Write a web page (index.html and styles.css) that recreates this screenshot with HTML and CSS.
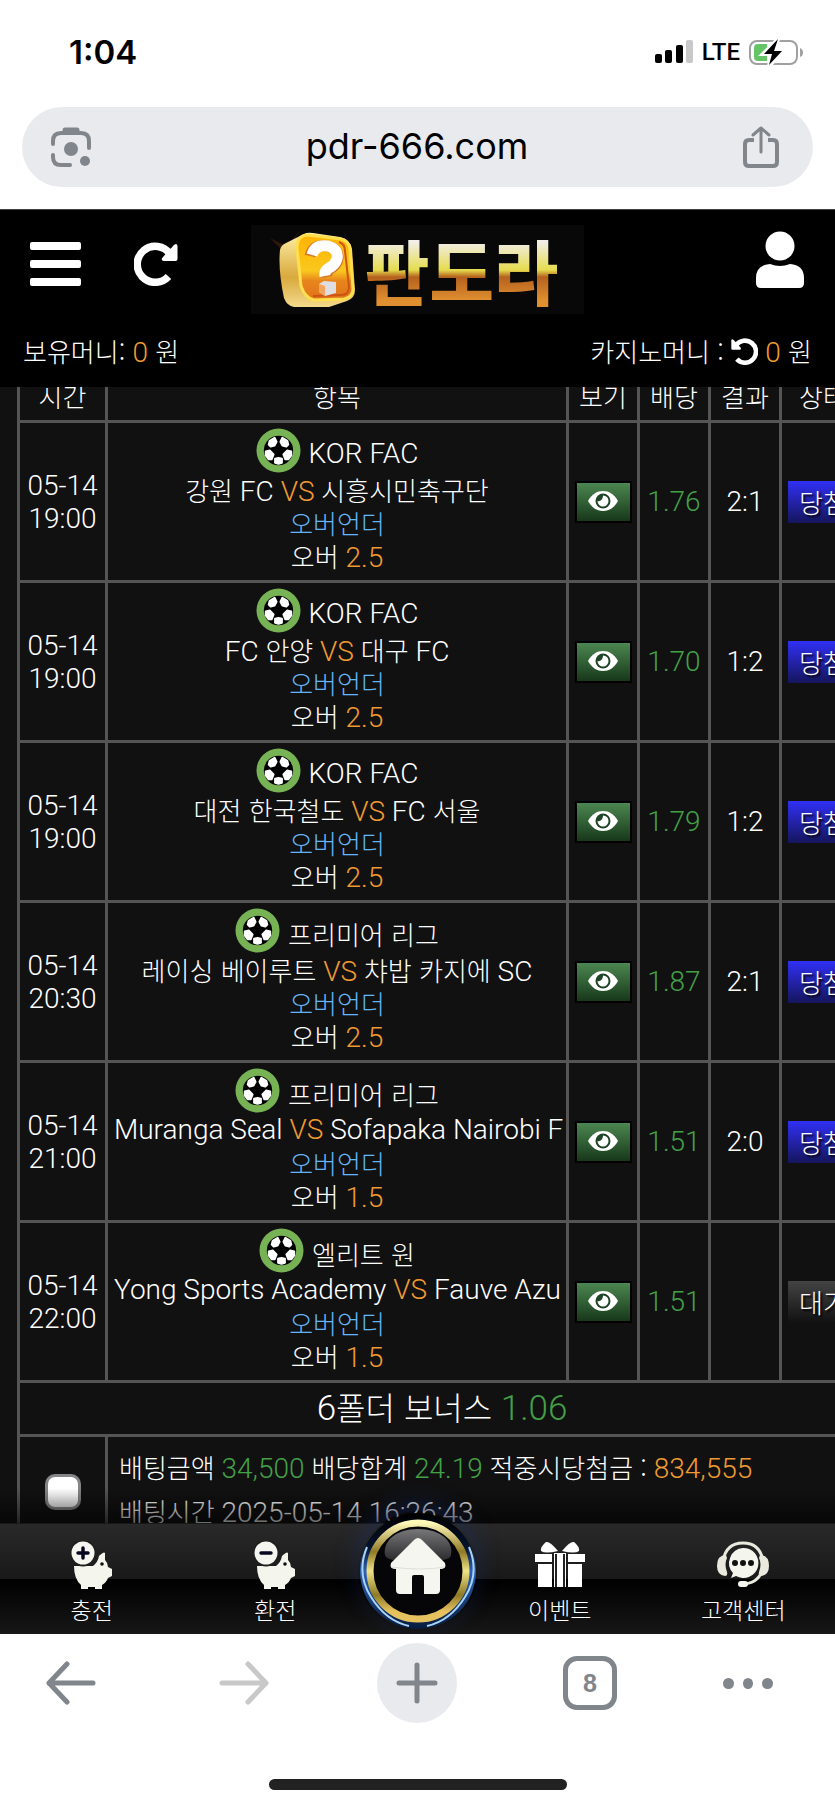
FILE: index.html
```html
<!DOCTYPE html>
<html lang="ko">
<head>
<meta charset="UTF-8">
<meta name="viewport" content="width=device-width, initial-scale=1.0">
<link rel="stylesheet" href="styles.css">
<title>판도라</title>
</head>
<body>
  <svg class="sprite" aria-hidden="true">
    <symbol id="ball" viewBox="0 0 46 46">
      <circle cx="23" cy="23" r="22.5" fill="#77b255"/>
      <circle cx="23" cy="23" r="15" fill="#000"/>
      <g fill="#fff" stroke="#fff" stroke-width="2" stroke-linejoin="round">
        <path d="M14 13l5-3 2 4-2 4-4 1-2-2z"/>
        <path d="M32 13l-5-3-2 4 2 4 4 1 2-2z"/>
        <path d="M10 24l4-1 4 4-2 5-3 0-3-4z"/>
        <path d="M36 24l-4-1-4 4 2 5 3 0 3-4z"/>
        <path d="M19.500 31.500l3.500-1 3.500 1v4l-3.500 1-3.500-1z"/>
      </g>
    </symbol>
    <symbol id="eye" viewBox="0 0 32 22">
      <path d="M1 11C5 4 10 1 16 1s11 3 15 10c-4 7-9 10-15 10S5 18 1 11z" fill="#fff"/>
      <circle cx="16" cy="11" r="7.500" fill="#1f4526"/>
      <path d="M16 5.500a5.500 5.500 0 1 1-5.500 5.500c2.500 1 5.500-1.500 5.500-5.500z" fill="#fff"/>
    </symbol>
    <symbol id="rotate" viewBox="0 0 44 44">
      <path d="M34.500 34.500A18 18 0 1 1 36 12" fill="none" stroke="#fff" stroke-width="7.500"/>
      <path d="M43.500 4v13a2 2 0 0 1-2 2H30q-4-.5-1-4L40 3q3-2.500 3.500 1z" fill="#fff"/>
    </symbol>
    <symbol id="pig" viewBox="0 0 42 48">
      <path d="M3 25h19q5-4 6-10 5-5 6-3v7q3 3 3 7l4 2v7l-4 2q-2 5-6 7v4h-7v-2h-7v2h-7v-4Q3 38 3 25z" fill="#f4f5ec"/>
      <circle cx="31" cy="23" r="1.800" fill="#111"/>
      <circle cx="12" cy="12" r="13.500" fill="#1f1f1f"/>
      <circle cx="12" cy="12" r="11.500" fill="#f6f6f0"/>
      <path d="M7 12h10" stroke="#070720" stroke-width="3.500" stroke-linecap="round"/>
    </symbol>
  </svg>

  <div class="status">
    <span class="clock">1:04</span>
    <div class="signal">
      <svg width="40" height="26" viewBox="0 0 40 26">
        <rect x="1" y="15" width="7" height="9" rx="2"/>
        <rect x="11" y="11" width="7" height="13" rx="2"/>
        <rect x="22" y="6" width="7" height="18" rx="2"/>
        <rect x="32" y="1" width="7" height="23" rx="2" fill="#c8c8c8"/>
      </svg>
      <span class="net">LTE</span>
      <svg width="56" height="28" viewBox="0 0 56 28">
        <rect x="2" y="3" width="47" height="23" rx="7" fill="none" stroke="#a0a0a0" stroke-width="2"/>
        <path d="M10 6h9v17h-9q-4 0-4-4v-9q0-4 4-4z" fill="#65c466"/>
        <path d="M52 10q3 1 3 4.500T52 19z" fill="#a0a0a0"/>
        <path d="M30 1L15 16h9l-3 12 15-15h-9z" stroke="#fff" stroke-width="4"/>
        <path d="M30 1L16 16h8l-3 11 13-14h-8z"/>
      </svg>
    </div>
  </div>

  <div class="urlbar">
    <button type="button" class="plain" aria-label="Lens">
      <svg width="42" height="42" viewBox="0 0 42 42" fill="none" stroke="#80868b" stroke-width="4" stroke-linecap="round">
        <path d="M3 18v-3q0-8 8-8h20q8 0 8 8v7M3 29v2q0 8 8 8h9"/>
        <path d="M13 6l3-4h10l3 4z" fill="#80868b" stroke="none"/>
        <path d="M15 4h12" stroke-width="5"/>
        <circle cx="21" cy="23" r="7" fill="#80868b" stroke="none"/>
        <circle cx="35" cy="35" r="5" fill="#80868b" stroke="none"/>
      </svg>
    </button>
    <span class="url">pdr-666.com</span>
    <button type="button" class="plain" aria-label="공유">
      <svg width="38" height="42" viewBox="0 0 38 42" fill="none" stroke="#80868b" stroke-width="4" stroke-linecap="round" stroke-linejoin="round">
        <path d="M12 14H7q-4 0-4 4v18q0 4 4 4h24q4 0 4-4V18q0-4-4-4h-5" stroke-linecap="butt"/>
        <path d="M19 26V2M11 9l8-7 8 7" stroke-width="3"/>
      </svg>
    </button>
  </div>

  <main class="site">
    <header class="top">
      <div class="top-bar">
        <div class="top-left">
          <button type="button" class="plain menu" aria-label="메뉴"><i></i><i></i><i></i></button>
          <button type="button" class="plain" aria-label="새로고침"><svg width="44" height="44"><use href="#rotate"/></svg></button>
        </div>
        <a href="#" class="logo">
          <svg width="92" height="84" viewBox="0 0 92 84">
            <defs>
              <linearGradient id="side" x1="0" y1="0" x2="0" y2="1">
                <stop offset="0" stop-color="#fff0a8"/><stop offset=".6" stop-color="#d9a93c"/><stop offset="1" stop-color="#f3d98c"/>
              </linearGradient>
              <linearGradient id="face" x1="0" y1="0" x2="0" y2="1">
                <stop offset="0" stop-color="#ffb300"/><stop offset=".55" stop-color="#f9c81e"/><stop offset=".7" stop-color="#e8861c"/><stop offset="1" stop-color="#e0701a"/>
              </linearGradient>
            </defs>
            <path d="M3 10l16 8L34 2 22 19l-8 26-1-25z" fill="#7a3510" opacity=".35"/>
            <path d="M13 22Q14 17 19 15L37 6q3-2 9-1l27 4q10 2 12 12l3 41q0 8-8 11l-18 6H27q-7-1-10-9Q11 42 13 22z" fill="url(#side)"/>
            <path d="M40 7l34 4q8 2 9 10l3 40q0 8-9 10l-30 1Q38 70 34 58L30 20Q30 8 40 7z" fill="url(#face)" stroke="#ffdf4d" stroke-width="3"/>
            <path d="M72 14q6 2 6 9l4 36q0 8-8 8l-28 1" fill="none" stroke="#cd5312" stroke-width="2"/>
            <path d="M43 28q3-12 17-10 12 2 11 13-1 6-8 10-4 3-3 8" fill="none" stroke="#d8742b" stroke-width="11"/>
            <path d="M45 27q3-11 16-9 11 3 9 13-2 6-8 9-5 3-4 8" fill="none" stroke="#fff" stroke-width="11"/>
            <path d="M52 56l5-3 12 1v11l-11 3-6-4z" fill="#dddde2"/>
            <path d="M52 56l6 2v10l-6-4z" fill="#f2a45d"/>
          </svg>
          <span class="logo-text">판도라</span>
        </a>
        <button type="button" class="plain user" aria-label="내 정보">
          <svg width="50" height="58" viewBox="0 0 50 58" fill="#fff">
            <circle cx="25" cy="15" r="14.500"/>
            <path d="M15 33q10 4 20 0 14 1 14 14v5q0 5-5 5H6q-5 0-5-5v-5q0-13 14-14z"/>
          </svg>
        </button>
      </div>
      <div class="money">
        <span>보유머니: <b class="num orange">0</b> 원</span>
        <span>카지노머니 : <button type="button" class="plain recall" aria-label="회수"><svg width="27" height="27"><use href="#rotate"/></svg></button> <b class="num orange">0</b> 원</span>
      </div>
    </header>

    <div class="bets">
      <table>
        <colgroup>
          <col class="c-time"><col><col class="c-odd"><col class="c-odd"><col class="c-odd"><col class="c-state">
        </colgroup>
        <thead>
          <tr><th>시간</th><th>항목</th><th>보기</th><th>배당</th><th>결과</th><th>상태</th></tr>
        </thead>
        <tbody>
          <tr>
            <td class="num">05-14<br>19:00</td>
            <td><div class="match">
              <div class="league"><svg width="45" height="45"><use href="#ball"/></svg><span class="num">KOR FAC</span></div>
              <div>강원<span class="num"> FC <b class="orange">VS</b> </span>시흥시민축구단</div>
              <div class="blue">오버언더</div>
              <div>오버<span class="num orange"> 2.5</span></div>
            </div></td>
            <td><button type="button" class="view" aria-label="보기"><svg width="32" height="22"><use href="#eye"/></svg></button></td>
            <td class="num green">1.76</td>
            <td class="num">2:1</td>
            <td><button type="button" class="state win">당첨</button></td>
          </tr>
          <tr>
            <td class="num">05-14<br>19:00</td>
            <td><div class="match">
              <div class="league"><svg width="45" height="45"><use href="#ball"/></svg><span class="num">KOR FAC</span></div>
              <div><span class="num">FC </span>안양<span class="num orange"> VS </span>대구<span class="num"> FC</span></div>
              <div class="blue">오버언더</div>
              <div>오버<span class="num orange"> 2.5</span></div>
            </div></td>
            <td><button type="button" class="view" aria-label="보기"><svg width="32" height="22"><use href="#eye"/></svg></button></td>
            <td class="num green">1.70</td>
            <td class="num">1:2</td>
            <td><button type="button" class="state win">당첨</button></td>
          </tr>
          <tr>
            <td class="num">05-14<br>19:00</td>
            <td><div class="match">
              <div class="league"><svg width="45" height="45"><use href="#ball"/></svg><span class="num">KOR FAC</span></div>
              <div>대전 한국철도<span class="num"> <b class="orange">VS</b> FC </span>서울</div>
              <div class="blue">오버언더</div>
              <div>오버<span class="num orange"> 2.5</span></div>
            </div></td>
            <td><button type="button" class="view" aria-label="보기"><svg width="32" height="22"><use href="#eye"/></svg></button></td>
            <td class="num green">1.79</td>
            <td class="num">1:2</td>
            <td><button type="button" class="state win">당첨</button></td>
          </tr>
          <tr>
            <td class="num">05-14<br>20:30</td>
            <td><div class="match">
              <div class="league"><svg width="45" height="45"><use href="#ball"/></svg><span>프리미어 리그</span></div>
              <div>레이싱 베이루트<span class="num orange"> VS </span>챠밥 카지에<span class="num"> SC</span></div>
              <div class="blue">오버언더</div>
              <div>오버<span class="num orange"> 2.5</span></div>
            </div></td>
            <td><button type="button" class="view" aria-label="보기"><svg width="32" height="22"><use href="#eye"/></svg></button></td>
            <td class="num green">1.87</td>
            <td class="num">2:1</td>
            <td><button type="button" class="state win">당첨</button></td>
          </tr>
          <tr>
            <td class="num">05-14<br>21:00</td>
            <td><div class="match">
              <div class="league"><svg width="45" height="45"><use href="#ball"/></svg><span>프리미어 리그</span></div>
              <div class="num">Muranga Seal <b class="orange">VS</b> Sofapaka Nairobi F</div>
              <div class="blue">오버언더</div>
              <div>오버<span class="num orange"> 1.5</span></div>
            </div></td>
            <td><button type="button" class="view" aria-label="보기"><svg width="32" height="22"><use href="#eye"/></svg></button></td>
            <td class="num green">1.51</td>
            <td class="num">2:0</td>
            <td><button type="button" class="state win">당첨</button></td>
          </tr>
          <tr>
            <td class="num">05-14<br>22:00</td>
            <td><div class="match">
              <div class="league"><svg width="45" height="45"><use href="#ball"/></svg><span>엘리트 원</span></div>
              <div class="num">Yong Sports Academy <b class="orange">VS</b> Fauve Azu</div>
              <div class="blue">오버언더</div>
              <div>오버<span class="num orange"> 1.5</span></div>
            </div></td>
            <td><button type="button" class="view" aria-label="보기"><svg width="32" height="22"><use href="#eye"/></svg></button></td>
            <td class="num green">1.51</td>
            <td></td>
            <td><button type="button" class="state">대기</button></td>
          </tr>
          <tr class="bonus">
            <td colspan="6"><span class="num">6</span>폴더 보너스<span class="num green"> 1.06</span></td>
          </tr>
          <tr class="total">
            <td><input type="checkbox" aria-label="선택"></td>
            <td colspan="5" class="sum">
              <div>배팅금액<span class="num green"> 34,500 </span>배당합계<span class="num green"> 24.19 </span>적중시당첨금 :<span class="num orange"> 834,555</span></div>
              <div>배팅시간<span class="num"> 2025-05-14 16:26:43</span></div>
            </td>
          </tr>
        </tbody>
      </table>
    </div>

    <nav class="dock">
      <a href="#">
        <svg width="42" height="48" viewBox="0 0 42 48"><use href="#pig"/><path d="M12 7v10" stroke="#070720" stroke-width="3.500" stroke-linecap="round"/></svg>
        충전
      </a>
      <a href="#">
        <svg width="42" height="48" viewBox="0 0 42 48"><use href="#pig"/></svg>
        환전
      </a>
      <a href="#" class="home" aria-label="홈">
        <svg width="120" height="120" viewBox="0 0 120 120">
          <defs>
            <linearGradient id="gold" x1="0" y1="0" x2="0" y2="1">
              <stop offset="0" stop-color="#fff8b8"/><stop offset=".3" stop-color="#8f7a25"/><stop offset=".5" stop-color="#efe287"/><stop offset=".75" stop-color="#8f7a25"/><stop offset=".92" stop-color="#e6c25f"/>
            </linearGradient>
            <linearGradient id="navy" x1="0" y1="0" x2="0" y2="1">
              <stop offset="0" stop-color="#000"/><stop offset=".3" stop-color="#04142e"/><stop offset=".5" stop-color="#2b62b8"/><stop offset="1" stop-color="#071a3c"/>
            </linearGradient>
            <linearGradient id="gloss" x1="0" y1="0" x2="0" y2="1">
              <stop offset="0" stop-color="#77777a"/><stop offset="1" stop-color="#2a2a2d"/>
            </linearGradient>
          </defs>
          <circle cx="60" cy="60" r="58" fill="url(#navy)"/>
          <path d="M9 36Q-2 62 13 86t38 29M111 36q11 26-4 50t-38 29" fill="none" stroke="#a8d4f5" stroke-width="2"/>
          <circle cx="60" cy="60" r="48" fill="#060608" stroke="url(#gold)" stroke-width="7"/>
          <path d="M60 18c22 0 36 12 33 26-1 5-8 6-33 6s-31-1-33-6c-2-14 11-26 33-26z" fill="url(#gloss)"/>
          <path d="M60 27q2 0 4 2l23 23q2 6-5 6v21q0 4-4 4H66V66q0-2-2-2h-8q-2 0-2 2v17H42q-4 0-4-4V58q-7 0-5-6l23-23q2-2 4-2z" fill="#f6f6f0"/>
          <path d="M33 56q30 4 54 0" fill="none" stroke="#dddfd8" stroke-width="1"/>
        </svg>
      </a>
      <a href="#">
        <svg width="54" height="48" viewBox="0 0 54 48" fill="#fff">
          <path d="M25 10Q12 13 8 10q-1-4 5-9 4-1 12 9zM29 10q13 3 17 0 1-4-5-9-4-1-12 9z"/>
          <path d="M2 13h17v8H2zM21 12h12v9H21zM35 13h17v8H35zM5 23h14v23H5zM21 21h12v25H21zM35 23h14v23H35z"/>
          <path d="M23 13v33M31 13v33" stroke="#222" stroke-width="2"/>
        </svg>
        이벤트
      </a>
      <a href="#">
        <svg width="54" height="48" viewBox="0 0 54 48">
          <path d="M7 20Q10 2 27 2t20 18q1 20-18 23" fill="none" stroke="#e9eadd" stroke-width="3"/>
          <path d="M10 14q-9 0-9 11 0 9 8 10 3 0 2-4-3-8 0-14zM44 14q9 0 9 11 0 9-8 10-3 0-2-4 3-8 0-14z" fill="#e9eadd"/>
          <path d="M27 7a15 15 0 1 1-7 28l-5 2 2-5A15 15 0 0 1 27 7z" fill="#f4f5ec"/>
          <rect x="22" y="40" width="10" height="6" rx="3" fill="#f4f5ec"/>
          <g fill="#111"><circle cx="19" cy="22" r="3"/><circle cx="27" cy="22" r="3"/><circle cx="35" cy="22" r="3"/></g>
        </svg>
        고객센터
      </a>
    </nav>
  </main>

  <footer class="toolbar">
    <div class="tools">
      <button type="button" class="plain tool" aria-label="뒤로">
        <svg width="50" height="44" viewBox="0 0 50 44"><path d="M47 22H3M21 3L3 22l18 19"/></svg>
      </button>
      <button type="button" class="plain tool off" aria-label="앞으로">
        <svg width="50" height="44" viewBox="0 0 50 44"><path d="M3 22h44M29 3l18 19-18 19"/></svg>
      </button>
      <button type="button" class="plain tool add" aria-label="새 탭">
        <svg width="42" height="42" viewBox="0 0 42 42"><path d="M21 3v36M3 21h36"/></svg>
      </button>
      <button type="button" class="plain tool"><span class="tabs">8</span></button>
      <button type="button" class="plain tool more" aria-label="더보기"><i></i><i></i><i></i></button>
    </div>
    <div class="handle"></div>
  </footer>
</body>
</html>
```
FILE: styles.css
```css
* {
  box-sizing: border-box;
}

body {
  display: flex;
  flex-direction: column;
  height: 100vh;
  margin: 0;
  background-color: #fff;
  color: #000;
  font-family: Inter, "Noto Sans CJK KR", sans-serif;
}

svg {
  display: block;
}

.sprite {
  position: absolute;
  width: 0;
  height: 0;
}

.plain {
  padding: 0;
  border: none;
  background: none;
  cursor: pointer;
}

/* phone status and address bar */
.status {
  display: flex;
  flex: none;
  justify-content: space-between;
  align-items: center;
  height: 103px;
  padding: 0 31px 0 69px;
}

.clock {
  font-size: 33px;
  font-weight: 600;
}

.signal {
  display: flex;
  align-items: center;
  gap: 8px;
}

.net {
  font-family: Roboto, sans-serif;
  font-size: 24px;
  font-weight: 500;
}

.urlbar {
  display: flex;
  flex: none;
  justify-content: space-between;
  align-items: center;
  height: 80px;
  margin: 4px 22px 22px;
  padding: 0 33px 0 28px;
  border-radius: 40px;
  background-color: #e8eaed;
}

.url {
  padding-bottom: 3px;
  font-size: 36px;
}

/* site */
.site {
  position: relative;
  flex: 1;
  min-height: 0;
  overflow: hidden;
  background-color: #111;
  color: #fff;
  font-family: "Noto Sans CJK KR", sans-serif;
  font-size: 26px;
  font-weight: 300;
  line-height: 33px;
}

.top {
  position: relative;
  z-index: 1;
  height: 178px;
  border-top: 1px solid #444;
  background-color: #000;
}

.top-bar {
  display: grid;
  grid-template-columns: 1fr auto 1fr;
  align-items: center;
  padding: 15px 30px 0;
}

.top-left {
  display: flex;
  align-items: center;
  gap: 53px;
  padding-bottom: 12px;
}

.menu {
  display: grid;
  gap: 10px;
  width: 51px;
}

.menu i {
  height: 8px;
  border-radius: 2px;
  background-color: #fff;
}

.logo {
  display: flex;
  align-items: center;
  gap: 6px;
  width: 333px;
  height: 89px;
  padding-left: 16px;
  background-color: #080808;
  text-decoration: none;
}

.logo-text {
  background: linear-gradient(#f2eee8 18%, #e6dc4e 50%, #b5611f 58%, #e09030 85%);
  background-clip: text;
  -webkit-background-clip: text;
  color: transparent;
  font-size: 70px;
  font-weight: 900;
  line-height: 88px;
}

.user {
  justify-self: end;
  padding-bottom: 20px;
}

.money {
  display: flex;
  justify-content: space-between;
  padding: 20px 23px 0;
}

.recall {
  padding-bottom: 6px;
  vertical-align: middle;
}

.recall svg {
  transform: scaleX(-1);
}

b {
  font-weight: 300;
}

.orange {
  color: #f09a30;
}

.green {
  color: #43a047;
}

.blue {
  color: #64b5f6;
}

.num {
  font-family: Roboto, sans-serif;
  font-size: 28px;
}

/* bet table, scrolled a little under the header */
.bets {
  margin: -19px 0 0 17px;
}

table {
  width: calc(100% + 32px);
  border-collapse: collapse;
  table-layout: fixed;
}

.c-time {
  width: 88px;
}

.c-odd {
  width: 71px;
}

.c-state {
  width: 85px;
}

th, td {
  height: 160px;
  padding: 0;
  border: 3px solid #555;
  font-weight: 300;
  text-align: center;
}

th {
  height: 52px;
}

.match {
  padding: 0 6px 4px;
  overflow: hidden;
  white-space: nowrap;
}

.match div {
  height: 33px;
}

.match .league {
  display: flex;
  justify-content: center;
  align-items: center;
  gap: 8px;
  height: 45px;
}

.league span {
  padding-top: 6px;
}

.view {
  display: flex;
  justify-content: center;
  width: 57px;
  height: 42px;
  margin: 0 auto;
  padding-top: 7px;
  border: 2px solid #000;
  background: linear-gradient(#4c8750, #17381b);
  cursor: pointer;
}

.state {
  width: 71px;
  height: 42px;
  padding: 0;
  border: none;
  background: linear-gradient(#444, #111);
  color: #fff;
  font: inherit;
  text-shadow: 2px 2px 2px #000;
  cursor: pointer;
}

.win {
  background: linear-gradient(#3030f5, #15155c);
}

.bonus td {
  height: 54px;
  padding-bottom: 2px;
  font-size: 32px;
}

.bonus .num {
  font-size: 35px;
}

input[type="checkbox"] {
  appearance: none;
  display: block;
  width: 36px;
  height: 36px;
  margin: 0 auto;
  border: 3px solid #858588;
  border-radius: 10px;
  background: linear-gradient(#fff 60%, #eee);
}

.total td {
  height: 112px;
}

.total .sum {
  padding: 0 0 6px 11px;
  line-height: 44px;
  text-align: left;
}

.sum div {
  height: 44px;
}

/* bottom menu */
.dock {
  position: absolute;
  right: 0;
  bottom: 0;
  left: 0;
  display: flex;
  height: 111px;
  border-top: 1px solid #3a3a3a;
  background: linear-gradient(#292929, #191919 50%, #000 50%, #171717);
}

.dock::before {
  content: "";
  position: absolute;
  right: 0;
  bottom: 100%;
  left: 0;
  height: 36px;
  background: linear-gradient(transparent, rgba(0, 0, 0, 0.6));
}

.dock a {
  display: flex;
  flex: 1;
  flex-direction: column;
  align-items: center;
  gap: 4px;
  padding-top: 17px;
  color: #fff;
  font-size: 23px;
  line-height: 32px;
  text-decoration: none;
}

.dock .home {
  position: relative;
  flex: none;
  width: 101px;
  padding: 0;
}

.home svg {
  position: absolute;
  top: -13px;
  border-radius: 50%;
  box-shadow: 0 -8px 24px rgba(30, 60, 150, 0.3);
}

/* browser toolbar */
.toolbar {
  flex: none;
  padding-bottom: 18px;
}

.tools {
  display: flex;
  justify-content: space-between;
  align-items: center;
  height: 98px;
  padding: 0 62px 0 31px;
}

.tool {
  display: flex;
  justify-content: center;
  align-items: center;
  width: 80px;
  height: 80px;
  color: #80868b;
}

.tool svg {
  fill: none;
  stroke: currentColor;
  stroke-width: 5px;
  stroke-linecap: round;
  stroke-linejoin: round;
}

.off {
  color: #c8c8c8;
}

.add {
  border-radius: 50%;
  background-color: #e8eaed;
}

.tabs {
  width: 54px;
  border: 5px solid #80868b;
  border-radius: 14px;
  font: bold 25px/44px "Liberation Sans", sans-serif;
}

.more {
  gap: 9px;
  width: 50px;
}

.more i {
  width: 11px;
  height: 11px;
  border-radius: 50%;
  background-color: #80868b;
}

.handle {
  width: 298px;
  height: 11px;
  margin: 47px auto 0;
  border-radius: 6px;
  background-color: #222;
}
```
